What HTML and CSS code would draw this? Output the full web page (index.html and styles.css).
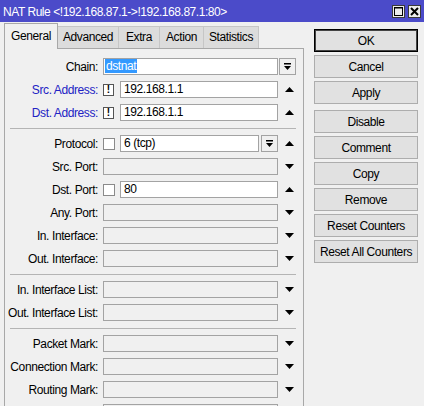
FILE: index.html
```html
<!DOCTYPE html>
<html>
<head>
<meta charset="utf-8">
<link rel="stylesheet" href="styles.css">
</head>
<body>
<div class="window">
  <div class="titlebar">
    <span class="title">NAT Rule &lt;!192.168.87.1-&gt;!192.168.87.1:80&gt;</span>
    <div class="tb-btns">
      <span class="tb-btn"><svg width="9" height="9" viewBox="0 0 9 9"><rect x="0.5" y="0.5" width="8" height="8" fill="none" stroke="#000" stroke-width="1"/><rect x="0.5" y="0.5" width="8" height="1" fill="#000"/></svg></span>
      <span class="tb-btn"><svg width="9" height="9" viewBox="0 0 9 9"><path d="M1 1 L8 8 M8 1 L1 8" stroke="#000" stroke-width="2"/></svg></span>
    </div>
  </div>
  <div class="body">
    <div class="left">
      <div class="tabs">
        <div class="tab active w-general">General</div>
        <div class="tab w-advanced">Advanced</div>
        <div class="tab w-extra">Extra</div>
        <div class="tab w-action">Action</div>
        <div class="tab w-stats">Statistics</div>
      </div>
      <div class="panel">
        <div class="row">
          <div class="label">Chain:</div>
          <div class="field"><div class="input white sel-pad"><span class="sel">dstnat</span></div></div>
          <div class="ddbtn outer"><svg width="9" height="9" viewBox="0 0 9 9"><rect x="1" y="1" width="7" height="1.5" fill="#000"/><polygon points="1,4 8,4 4.5,8" fill="#000"/></svg></div>
        </div>
        <div class="row">
          <div class="label blue">Src. Address:</div>
          <div class="field"><span class="bang">!</span><div class="input white grow">192.168.1.1</div></div>
          <div class="arrowcol"><svg width="9" height="5" viewBox="0 0 9 5"><polygon points="0,5 9,5 4.5,0" fill="#000"/></svg></div>
        </div>
        <div class="row">
          <div class="label blue">Dst. Address:</div>
          <div class="field"><span class="bang">!</span><div class="input white grow">192.168.1.1</div></div>
          <div class="arrowcol"><svg width="9" height="5" viewBox="0 0 9 5"><polygon points="0,5 9,5 4.5,0" fill="#000"/></svg></div>
        </div>
        <div class="sep"></div>
        <div class="row">
          <div class="label">Protocol:</div>
          <div class="field"><span class="check"></span><div class="input white grow">6 (tcp)</div><div class="ddbtn inner"><svg width="9" height="9" viewBox="0 0 9 9"><rect x="1" y="1" width="7" height="1.5" fill="#000"/><polygon points="1,4 8,4 4.5,8" fill="#000"/></svg></div></div>
          <div class="arrowcol"><svg width="9" height="5" viewBox="0 0 9 5"><polygon points="0,5 9,5 4.5,0" fill="#000"/></svg></div>
        </div>
        <div class="row">
          <div class="label">Src. Port:</div>
          <div class="field"><div class="input grow"></div></div>
          <div class="arrowcol"><svg width="9" height="5" viewBox="0 0 9 5"><polygon points="0,0 9,0 4.5,5" fill="#000"/></svg></div>
        </div>
        <div class="row">
          <div class="label">Dst. Port:</div>
          <div class="field"><span class="check"></span><div class="input white grow">80</div></div>
          <div class="arrowcol"><svg width="9" height="5" viewBox="0 0 9 5"><polygon points="0,5 9,5 4.5,0" fill="#000"/></svg></div>
        </div>
        <div class="row">
          <div class="label">Any. Port:</div>
          <div class="field"><div class="input grow"></div></div>
          <div class="arrowcol"><svg width="9" height="5" viewBox="0 0 9 5"><polygon points="0,0 9,0 4.5,5" fill="#000"/></svg></div>
        </div>
        <div class="row">
          <div class="label">In. Interface:</div>
          <div class="field"><div class="input grow"></div></div>
          <div class="arrowcol"><svg width="9" height="5" viewBox="0 0 9 5"><polygon points="0,0 9,0 4.5,5" fill="#000"/></svg></div>
        </div>
        <div class="row">
          <div class="label">Out. Interface:</div>
          <div class="field"><div class="input grow"></div></div>
          <div class="arrowcol"><svg width="9" height="5" viewBox="0 0 9 5"><polygon points="0,0 9,0 4.5,5" fill="#000"/></svg></div>
        </div>
        <div class="sep"></div>
        <div class="row">
          <div class="label">In. Interface List:</div>
          <div class="field"><div class="input grow"></div></div>
          <div class="arrowcol"><svg width="9" height="5" viewBox="0 0 9 5"><polygon points="0,0 9,0 4.5,5" fill="#000"/></svg></div>
        </div>
        <div class="row">
          <div class="label">Out. Interface List:</div>
          <div class="field"><div class="input grow"></div></div>
          <div class="arrowcol"><svg width="9" height="5" viewBox="0 0 9 5"><polygon points="0,0 9,0 4.5,5" fill="#000"/></svg></div>
        </div>
        <div class="sep"></div>
        <div class="row">
          <div class="label">Packet Mark:</div>
          <div class="field"><div class="input grow"></div></div>
          <div class="arrowcol"><svg width="9" height="5" viewBox="0 0 9 5"><polygon points="0,0 9,0 4.5,5" fill="#000"/></svg></div>
        </div>
        <div class="row">
          <div class="label">Connection Mark:</div>
          <div class="field"><div class="input grow"></div></div>
          <div class="arrowcol"><svg width="9" height="5" viewBox="0 0 9 5"><polygon points="0,0 9,0 4.5,5" fill="#000"/></svg></div>
        </div>
        <div class="row">
          <div class="label">Routing Mark:</div>
          <div class="field"><div class="input grow"></div></div>
          <div class="arrowcol"><svg width="9" height="5" viewBox="0 0 9 5"><polygon points="0,0 9,0 4.5,5" fill="#000"/></svg></div>
        </div>
        <div class="row">
          <div class="label"></div>
          <div class="field"><div class="input grow"></div></div>
          <div class="arrowcol"></div>
        </div>
      </div>
    </div>
    <div class="actions">
      <div class="btn default">OK</div>
      <div class="btn">Cancel</div>
      <div class="btn">Apply</div>
      <div class="btn gap">Disable</div>
      <div class="btn">Comment</div>
      <div class="btn">Copy</div>
      <div class="btn">Remove</div>
      <div class="btn">Reset Counters</div>
      <div class="btn">Reset All Counters</div>
    </div>
  </div>
</div>
</body>
</html>
```

FILE: styles.css
```css
html, body {
  margin: 0;
  padding: 0;
}
body {
  width: 424px;
  height: 406px;
  overflow: hidden;
  background: #f0f0f0;
  font-family: "Liberation Sans", Arial, sans-serif;
  font-size: 12px;
  letter-spacing: -0.4px;
  color: #000;
}
.window {
  width: 424px;
  height: 406px;
  overflow: hidden;
}
.titlebar {
  height: 22px;
  background: #4b4bc9;
  display: flex;
  align-items: center;
  justify-content: space-between;
  padding: 0 3px 0 3px;
  color: #fff;
}
.title {
  font-size: 12px;
  letter-spacing: -0.45px;
  padding-top: 1px;
}
.tb-btns {
  display: flex;
  gap: 3px;
}
.tb-btn {
  width: 13px;
  height: 13px;
  box-sizing: border-box;
  border: 1px solid #3a3a3a;
  background: #ececec;
  display: flex;
  align-items: center;
  justify-content: center;
}
.body {
  display: flex;
}
.left {
  margin-left: 4px;
  width: 300px;
}
.tabs {
  display: flex;
  align-items: flex-end;
  height: 26px;
}
.tab {
  height: 22px;
  box-sizing: border-box;
  border: 1px solid #c6c6c6;
  border-bottom: none;
  background: #dcdcdc;
  line-height: 21px;
  text-align: center;
  margin-left: -1px;
}
.tab:first-child {
  margin-left: 0;
}
.w-general { width: 54px; }
.w-advanced { width: 62px; }
.w-extra { width: 42px; }
.w-action { width: 45px; }
.w-stats { width: 56px; }
.tab.active {
  height: 26px;
  background: #f0f0f0;
  border-color: #a8a8a8;
  line-height: 24px;
  position: relative;
  margin-bottom: -1px;
  z-index: 1;
}
.panel {
  border: 1px solid #a8a8a8;
  border-bottom: none;
  height: 400px;
  padding-top: 6px;
  box-sizing: border-box;
}
.row {
  display: flex;
  align-items: center;
  height: 23px;
}
.label {
  width: 93px;
  margin-right: 5px;
  text-align: right;
  white-space: nowrap;
}
.label.blue {
  color: #2222c4;
}
.field {
  width: 175px;
  display: flex;
  align-items: center;
}
.input {
  height: 17px;
  box-sizing: border-box;
  border: 1px solid #a3a3a3;
  background: #f0f0f0;
  padding-left: 3px;
  line-height: 15px;
  white-space: nowrap;
  width: 175px;
}
.input.grow {
  flex: 1;
  width: auto;
  min-width: 0;
}
.input.white {
  background: #fff;
}
.input.sel-pad {
  padding-left: 1px;
}
.sel {
  background: #3399ff;
  color: #fff;
  padding: 0 1px;
}
.bang {
  width: 11px;
  height: 12px;
  box-sizing: border-box;
  border: 1px solid #555;
  background: #fff;
  font-weight: bold;
  font-size: 10px;
  line-height: 10px;
  text-align: center;
  margin-right: 6px;
  letter-spacing: 0;
}
.check {
  width: 12px;
  height: 12px;
  box-sizing: border-box;
  border: 1px solid #8a8a8a;
  background: #fff;
  margin-right: 5px;
}
.ddbtn {
  width: 17px;
  height: 17px;
  box-sizing: border-box;
  border: 1px solid #a3a3a3;
  background: #f0f0f0;
  display: flex;
  align-items: center;
  justify-content: center;
}
.ddbtn.outer {
  margin-left: 1px;
}
.ddbtn.inner {
  margin-left: 2px;
}
.arrowcol {
  width: 22px;
  display: flex;
  justify-content: center;
}
.sep {
  height: 8px;
  margin: 0 7px 0 5px;
  display: flex;
  align-items: center;
}
.sep::before {
  content: "";
  flex: 1;
  height: 1px;
  background: #b4b4b4;
}
.actions {
  margin-left: 10px;
  width: 104px;
  padding-top: 7px;
}
.btn {
  height: 23px;
  box-sizing: border-box;
  border: 1px solid #adadad;
  background: #e1e1e1;
  display: flex;
  align-items: center;
  justify-content: center;
  margin-bottom: 3px;
  white-space: nowrap;
}
.btn.default {
  border: 1px solid #000;
  box-shadow: inset 0 0 0 1px #444;
}
.btn.gap {
  margin-top: 6px;
}
```
